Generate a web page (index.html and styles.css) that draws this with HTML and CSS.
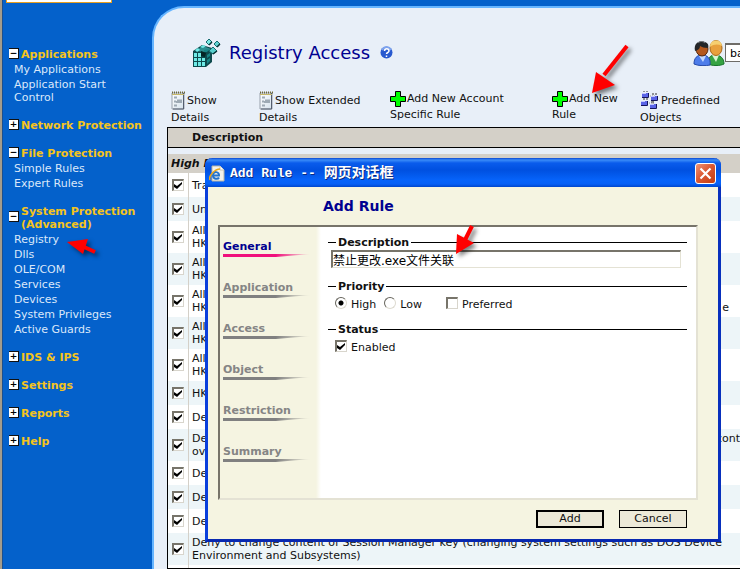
FILE: index.html
```html
<!DOCTYPE html>
<html lang="en">
<head>
<meta charset="utf-8">
<title>Registry Access</title>
<link rel="stylesheet" href="styles.css">
</head>
<body>
<svg class="defs" width="0" height="0" aria-hidden="true">
  <defs>
    <linearGradient id="page" x1="0" y1="0" x2="1" y2="1"><stop offset="0" stop-color="#fff"/><stop offset="1" stop-color="#d5e2ec"/></linearGradient>
    <symbol id="i-note" viewBox="0 0 14 19">
      <path d="M1 2h12v16H1z" fill="url(#page)" stroke="#99a1ac"/>
      <path d="M12.5 2v16H2" fill="none" stroke="#555e6e"/>
      <path d="M1 1.5h13" stroke="#6e6838" stroke-width="2" stroke-dasharray="1 1"/>
      <path d="M1 3.5h12" stroke="#c8b96a"/>
      <path d="M3 6.5h3M3 10.500h2M6 9.500h5M5 11h6M3 14.500h3" stroke="#9eaab4" stroke-width="2"/>
    </symbol>
    <symbol id="i-plus" viewBox="0 0 16 16">
      <path d="M5.500 .5h5v5h5v5h-5v5h-5v-5h-5v-5h5z" fill="#0f0" stroke="#000"/>
    </symbol>
    <symbol id="i-blocks" viewBox="0 0 19 19">
      <path d="M6 5h10M5 12h9M13 8v7" stroke="#9a9a9a" stroke-dasharray="1 1"/>
      <g fill="#5a64e6"><path d="M2 2h6v4H2zM11 5h6v4h-6zM1 10h6v4H1zM10 13h6v4h-6z"/></g>
      <g fill="#c3c7ff"><path d="M2 2h4v1H2zM11 5h4v1h-4zM1 10h4v1H1zM10 13h4v1h-4z"/></g>
      <path d="M2 6.500h6.500V2M11 9.500h6.500V5M1 14.500h6.500V10M10 17.500h6.500V13" fill="none" stroke="#14145c"/>
      <path d="M3 0h2M6 0h2M12 3h2M15 3h2M3 8h2M6 8h2M11 11h3" stroke="#333"/>
    </symbol>
  </defs>
</svg>
<div class="app">
  <aside class="sidebar">
    <input class="search" type="text" aria-label="Search">
    <nav class="menu">
      <section><h2><button class="tog" aria-label="Collapse">−</button>Applications</h2>
        <a href="#">My Applications</a><a href="#">Application Start Control</a></section>
      <section><h2><button class="tog" aria-label="Expand">+</button>Network Protection</h2></section>
      <section><h2><button class="tog" aria-label="Collapse">−</button>File Protection</h2>
        <a href="#">Simple Rules</a><a href="#">Expert Rules</a></section>
      <section><h2><button class="tog" aria-label="Collapse">−</button>System Protection<br>(Advanced)</h2>
        <a href="#">Registry</a><a href="#">Dlls</a><a href="#">OLE/COM</a><a href="#">Services</a><a href="#">Devices</a><a href="#">System Privileges</a><a href="#">Active Guards</a></section>
      <section><h2><button class="tog" aria-label="Expand">+</button>IDS &amp; IPS</h2></section>
      <section><h2><button class="tog" aria-label="Expand">+</button>Settings</h2></section>
      <section><h2><button class="tog" aria-label="Expand">+</button>Reports</h2></section>
      <section><h2><button class="tog" aria-label="Expand">+</button>Help</h2></section>
    </nav>
  </aside>
  <main class="panel">
    <header class="head">
      <svg class="cube" width="30" height="30" viewBox="0 0 30 30" aria-hidden="true">
        <path d="M1 13l9-6 10 3v14l-6 5H1z" fill="#0d4a4d"/>
        <path d="M3 13l8-5 8 3-5 3z" fill="#2c8e90"/>
        <g fill="#6eeae6"><path d="M2 15h3v4H2zM6 15h3v4H6zM2 20h3v3H2zM6 20h3v3H6zM10 20h3v3h-3zM2 24h3v4H2zM6 24h3v4H6zM10 24h3v4h-3zM3 12l3-2 2 2-3 2zM8 9l3-2 3 1-3 2z"/></g>
        <g fill="#178486"><path d="M15 22l3-2v3l-3 3zM15 17l3-2v3l-3 2zM12 12l5-1-2 3h-3z"/></g>
        <path d="M9 13l5 2-1 4-4-1z" fill="#052325"/>
        <g stroke="#176b70"><path d="M14 4l3-3 3 3-3 3z" fill="#7ce9e4"/><path d="M22 6l3-3 3 3-3 3z" fill="#62d3d2"/><path d="M17 13l4-4 4 4-4 3z" fill="#58cfcd"/></g>
        <path d="M17 7l3-3M25 9l3-3M21 16l4-3" stroke="#073234" stroke-width="1.500"/>
      </svg>
      <h1>Registry Access</h1>
      <svg class="help" width="13" height="13" viewBox="0 0 13 13" role="img" aria-label="Help"><circle cx="6.500" cy="6.500" r="6" fill="#2759cf"/><path d="M2 4a5 5 0 0 1 9 0" fill="none" stroke="#7da3ee" stroke-width="2"/><path d="M4.500 5c0-3 4.500-3 4.500 0 0 1.500-2.500 1.500-2.500 3M6.500 9.500v1.500" fill="none" stroke="#fff" stroke-width="1.500"/></svg>
      <svg class="users" width="32" height="26" viewBox="0 0 32 26" aria-hidden="true">
        <path d="M15 24c0-6 2-9 7-9s9 3 9 9c-4 2-12 2-16 0z" fill="#35a342" stroke="#16732a"/>
        <path d="M19 15l4 7 3-7z" fill="#d7f5d4"/>
        <ellipse cx="23" cy="8" rx="6" ry="7.500" fill="#e8a03c" stroke="#a9671a"/>
        <path d="M17 7c0-9 12-8 12-1-4-2-8-2-12 1z" fill="#f6cf70"/>
        <path d="M1 24c0-6 3-9 8-9s9 3 8 10c-4 1-12 1-16-1z" fill="#4d7cea" stroke="#2448a8"/>
        <path d="M6 16l4 6 3-6z" fill="#c3d8ff"/>
        <ellipse cx="9" cy="9" rx="6" ry="7" fill="#b4581d" stroke="#5b2a0c"/>
        <path d="M2 11C0 1 9 0 12 2c3 1 4 3 3 6-4 0-6-1-8-2 0 3-2 4-5 5z" fill="#232629"/>
        <path d="M5 3c2-2 5-2 7 0" fill="none" stroke="#80868c"/>
      </svg>
      <input class="account" type="text" value="ba" aria-label="Account">
    </header>
    <div class="tools">
      <a class="tall" href="#"><svg width="14" height="19"><use href="#i-note"/></svg><span>Show</span><br>Details</a>
      <a class="tall" href="#"><svg width="14" height="19"><use href="#i-note"/></svg><span>Show Extended</span><br>Details</a>
      <a href="#"><svg width="16" height="16"><use href="#i-plus"/></svg><span>Add New Account</span><br>Specific Rule</a>
      <a href="#"><svg width="16" height="16"><use href="#i-plus"/></svg><span>Add New</span><br>Rule</a>
      <a class="tall" href="#"><svg width="19" height="19"><use href="#i-blocks"/></svg><span>Predefined</span><br>Objects</a>
    </div>
    <table class="rules">
      <thead><tr><th></th><th>Description</th></tr></thead>
      <tbody>
        <tr class="gap"><td colspan="2"></td></tr>
        <tr class="group"><th colspan="2">High Priority</th></tr>
        <tr><td><input type="checkbox" checked aria-label="Rule 1"></td><td>Tra</td></tr>
        <tr><td><input type="checkbox" checked aria-label="Rule 2"></td><td>Un</td></tr>
        <tr class="two"><td><input type="checkbox" checked aria-label="Rule 3"></td><td>All<br>HK</td></tr>
        <tr class="two"><td><input type="checkbox" checked aria-label="Rule 4"></td><td>All<br>HK</td></tr>
        <tr class="two"><td><input type="checkbox" checked aria-label="Rule 5"></td><td>All<br><span class="split"><span>HK</span><span class="inset">e</span></span></td></tr>
        <tr class="two"><td><input type="checkbox" checked aria-label="Rule 6"></td><td>All<br>HK</td></tr>
        <tr class="two"><td><input type="checkbox" checked aria-label="Rule 7"></td><td>All<br>HK</td></tr>
        <tr><td><input type="checkbox" checked aria-label="Rule 8"></td><td>HK</td></tr>
        <tr><td><input type="checkbox" checked aria-label="Rule 9"></td><td>De</td></tr>
        <tr class="two"><td><input type="checkbox" checked aria-label="Rule 10"></td><td><span class="split"><span>De</span><span>cont</span></span>ov</td></tr>
        <tr><td><input type="checkbox" checked aria-label="Rule 11"></td><td>De</td></tr>
        <tr><td><input type="checkbox" checked aria-label="Rule 12"></td><td>De</td></tr>
        <tr><td><input type="checkbox" checked aria-label="Rule 13"></td><td>De</td></tr>
        <tr class="two"><td><input type="checkbox" checked aria-label="Rule 14"></td><td>Deny to change content of Session Manager key (changing system settings such as DOS Device<br>Environment and Subsystems)</td></tr>
        <tr class="end"><td></td><td></td></tr>
      </tbody>
    </table>
  </main>
</div>

<div class="dialog" role="dialog" aria-labelledby="dlg-title">
  <div class="titlebar">
    <svg width="16" height="17" viewBox="0 0 16 17" aria-hidden="true"><path d="M3 1h8l4 4v11H3z" fill="#f4f2ea" stroke="#b9b5a5"/><path d="M11 1v4h4" fill="#fff" stroke="#c9c5b5"/><path d="M10 12.500c-1 2-6 2-6-2 0-5 6.500-4 6 0H4.500" fill="none" stroke="#2274cf" stroke-width="2"/><path d="M1 15C-1 11 6 4 11 4" fill="none" stroke="#eba81a" stroke-width="1.500"/></svg>
    <span id="dlg-title">Add Rule -- <span class="cjk">网页对话框</span></span>
    <button class="close" aria-label="Close"><svg width="13" height="13" viewBox="0 0 13 13"><path d="M1.500 1.500l10 10M11.500 1.500l-10 10" stroke="#fff" stroke-width="2.200"/></svg></button>
  </div>
  <form class="body">
    <h2>Add Rule</h2>
    <div class="frame">
      <nav class="steps">
        <a class="on" href="#">General</a><a href="#">Application</a><a href="#">Access</a><a href="#">Object</a><a href="#">Restriction</a><a href="#">Summary</a>
      </nav>
      <div class="fields">
        <fieldset class="desc"><legend>Description</legend>
          <input type="text" value="禁止更改.exe文件关联" aria-label="Description"></fieldset>
        <fieldset class="prio"><legend>Priority</legend>
          <div class="opts">
            <label><input type="radio" name="priority" checked>High</label>
            <label><input type="radio" name="priority">Low</label>
            <label class="pref"><input type="checkbox">Preferred</label>
          </div></fieldset>
        <fieldset><legend>Status</legend>
          <div class="opts"><label><input type="checkbox" checked>Enabled</label></div></fieldset>
      </div>
    </div>
    <div class="actions"><button class="default" type="button">Add</button><button type="button">Cancel</button></div>
  </form>
</div>

<svg class="arrow a1" width="56" height="60" viewBox="0 0 56 60" aria-hidden="true"><path d="M40 4L17 33" stroke="#f00" stroke-width="4"/><path d="M5 51L9 30 28 43z" fill="#f00"/></svg>
<svg class="arrow a2" width="36" height="32" viewBox="0 0 36 32" aria-hidden="true"><path d="M3 12L24 9 19 24z" fill="#f00"/><path d="M18 16L31 22" stroke="#f00" stroke-width="4"/></svg>
<svg class="arrow a3" width="30" height="38" viewBox="0 0 30 38" aria-hidden="true"><path d="M20 4L13 18" stroke="#f00" stroke-width="4"/><path d="M4 32L5 12 22 21z" fill="#f00"/></svg>
</body>
</html>
```
FILE: styles.css
```css
* { box-sizing: border-box; }
body {
  margin: 0;
  overflow: hidden;
  background: #0461cb;
  font: 11px/13px "DejaVu Sans", "Noto Sans CJK SC", sans-serif;
  color: #111;
}
a { color: inherit; text-decoration: none; }
button, input { font: inherit; margin: 0; }
.defs { position: absolute; }

.app { display: flex; min-height: 100vh; border-left: 2px solid #a49c8c; }

/* sidebar */
.sidebar { width: 150px; flex: none; border-left: 1px solid #1c4f8e; }
.search {
  display: block;
  width: 106px;
  height: 3px;
  margin-left: 3px;
  padding: 0;
  border: 1px solid #e8a020;
  border-top: 0;
  background: #fff;
}
.menu { padding: 45px 0 0 6px; }
.menu section { margin-bottom: 13px; }
.menu h2 {
  position: relative;
  margin: 0;
  padding: 0 0 2px 12px;
  font-size: 11px;
  line-height: 13px;
  color: #f4c41c;
  white-space: nowrap;
}
.menu a { display: block; width: 120px; margin-left: 5px; padding-bottom: 2px; color: #dbe8fa; }
.tog {
  position: absolute;
  left: 0;
  top: calc(50% - 8px);
  width: 10px;
  height: 11px;
  padding: 0;
  border: 1px solid #111;
  border-left: 0;
  background: #fff;
  color: #000;
  font-size: 9px;
  line-height: 9px;
}

/* main panel */
.panel {
  flex: 1;
  min-width: 0;
  margin-top: 6px;
  padding-left: 13px;
  border: 3px solid #66b5ff;
  border-width: 2px 0 0 2px;
  border-top-left-radius: 32px;
  background: #e8eff8;
}
.head { display: flex; align-items: center; height: 89px; padding-left: 25px; }
.head h1 { margin: 0 0 0 7px; font-size: 18px; line-height: 22px; font-weight: normal; color: #000090; white-space: nowrap; }
.head .help { margin-left: 10px; }
.head .users { margin-left: auto; }
.account {
  width: 15px;
  height: 19px;
  padding: 0 0 0 4px;
  border: 2px solid #6e6c68;
  border-width: 2px 0 1px 1px;
  background: #fff;
}
.tools {
  display: grid;
  grid-template-columns: 88px 131px 162px 88px 1fr;
  height: 36px;
  margin-top: -6px;
  padding-left: 4px;
}
.tools a { line-height: 15px; white-space: nowrap; }
.tools svg { display: inline-block; vertical-align: middle; }
.tools span { margin-left: 1px; }
.tools .tall { line-height: 16px; }
.tools .tall span { margin-left: 2px; }

/* rules table */
.rules { width: 100%; table-layout: fixed; border-collapse: separate; border-spacing: 0; border: 1px solid #000; border-right: 0; }
.rules thead th { height: 20px; padding: 0 0 0 3px; border-bottom: 1px solid #000; background: #d4d0c8; text-align: left; }
.rules thead th:first-child { width: 21px; }
.rules td { height: 24px; padding: 0 0 0 3px; line-height: 13px; white-space: nowrap; overflow: hidden; }
.rules tbody td:first-child { padding: 0 0 0 4px; border-right: 1px solid #d4d0c8; }
.rules .two td { height: 32px; }
.rules tbody tr { background: #fff; }
.rules tbody tr:nth-child(even) { background: #edf5f8; }
.rules tbody .gap td:first-child { height: 6px; border: 0; padding: 0; background: #e8eff8; }
.rules .group th { height: 19px; padding: 0 0 0 3px; background: #d4d0c8; text-align: left; font-style: italic; }
.rules .end td { height: 3px; padding: 0; }
.split { display: flex; justify-content: space-between; }
.inset { padding-right: 11px; }

input[type="checkbox"] {
  appearance: none;
  display: block;
  width: 12px;
  height: 12px;
  border: 1px solid #d8d5cc;
  border-top: 2px solid #77746a;
  border-left: 2px solid #77746a;
  background: #fff;
}
input[type="checkbox"]:checked::before {
  content: "";
  display: block;
  width: 8px;
  height: 7px;
  margin-top: 1px;
  background: #000;
  clip-path: polygon(0 2px, 3px 4px, 8px 0, 8px 2px, 3px 7px, 0 5px);
}
input[type="radio"] {
  appearance: none;
  display: block;
  width: 12px;
  height: 12px;
  border: 1px solid;
  border-color: #66645c #dddad0 #dddad0 #66645c;
  border-radius: 50%;
  background: #fff;
}
input[type="radio"]:checked { background: radial-gradient(circle, #000 2px, #fff 3px); }

/* dialog window */
.dialog {
  position: absolute;
  top: 158px;
  left: 205px;
  right: 19px;
  border: 3px solid #0a3fdc;
  border-top: 0;
  border-right-color: #0830bd;
  border-bottom-color: #0828b0;
  border-radius: 7px 7px 0 0;
  background: #f5f4e1;
}
.titlebar {
  display: flex;
  align-items: center;
  height: 29px;
  margin: 0 -3px;
  padding: 2px 5px 0 4px;
  border-radius: 7px 7px 0 0;
  background: linear-gradient(#0a46d0, #3a8cf8 2px, #0a5cec 5px, #0050e0 12px, #0663fa 22px, #0660f6 26px, #0046cc);
  color: #fff;
  font: bold 13px/16px "Liberation Mono", "Noto Sans CJK SC", monospace;
  text-shadow: 1px 1px 0 #0a2a80;
}
.titlebar > span { margin-left: 5px; white-space: pre; }
.cjk { font-size: 14px; }
.close {
  display: grid;
  place-items: center;
  width: 21px;
  height: 21px;
  margin-left: auto;
  padding: 0;
  border: 1px solid #fff;
  border-radius: 3px;
  background: linear-gradient(135deg, #ee9478, #dc5a34 45%, #c23c10);
}
.body { padding: 10px 20px 11px 10px; }
.body h2 { margin: 0 0 10px 105px; font-size: 14px; line-height: 18px; color: #000090; }
.frame {
  display: grid;
  grid-template-columns: 100px 1fr;
  min-height: 275px;
  border: 2px solid #77746a;
  border-right-color: #e4e2d4;
  border-bottom-color: #e4e2d4;
  background: linear-gradient(90deg, #f5f4e1 96px, #fff 101px);
}
.steps { padding: 13px 0 0 3px; }
.steps a { display: block; height: 41px; color: #858585; font-weight: bold; line-height: 14px; }
.steps a::after {
  content: "";
  display: block;
  height: 3px;
  width: 88px;
  background: linear-gradient(90deg, #808080 60%, transparent);
  clip-path: polygon(0 0, 100% 0, 60% 100%, 0 100%);
}
.steps .on { color: #000090; }
.steps .on::after { background: linear-gradient(90deg, #f0107c 60%, transparent); }
.fields { padding: 9px 9px 0 8px; }
fieldset { min-width: 0; margin: 0; padding: 0 0 0 3px; border: 0; border-top: 1px solid #000; }
legend { margin-left: 5px; padding: 0 2px; font-weight: bold; line-height: 13px; }
.desc { height: 44px; }
.prio { height: 43px; }
.desc input {
  display: block;
  width: calc(100% - 6px);
  height: 18px;
  margin-top: 1px;
  padding: 0;
  border: 1px solid #e4e2d4;
  border-top: 2px solid #77746a;
  border-left: 2px solid #77746a;
  background: #fff;
  font-size: 12px;
}
.opts { display: flex; padding: 4px 0 0 4px; }
.opts label { display: flex; gap: 4px; height: 15px; line-height: 16px; }
.opts label + label { margin-left: 8px; }
.opts .pref { margin-left: 24px; }
.actions { display: flex; justify-content: flex-end; gap: 15px; margin: 10px 11px 0 0; }
.actions button { width: 68px; height: 18px; padding: 0; border: 1px solid #000; background: #ece9d8; color: #111; line-height: 14px; }
.actions .default { border-width: 2px; }

/* pointer callouts */
.arrow { position: absolute; filter: drop-shadow(3px 3px 2px rgba(0, 0, 0, .5)); }
.a1 { left: 587px; top: 42px; }
.a2 { left: 64px; top: 230px; }
.a3 { left: 452px; top: 222px; }
```
